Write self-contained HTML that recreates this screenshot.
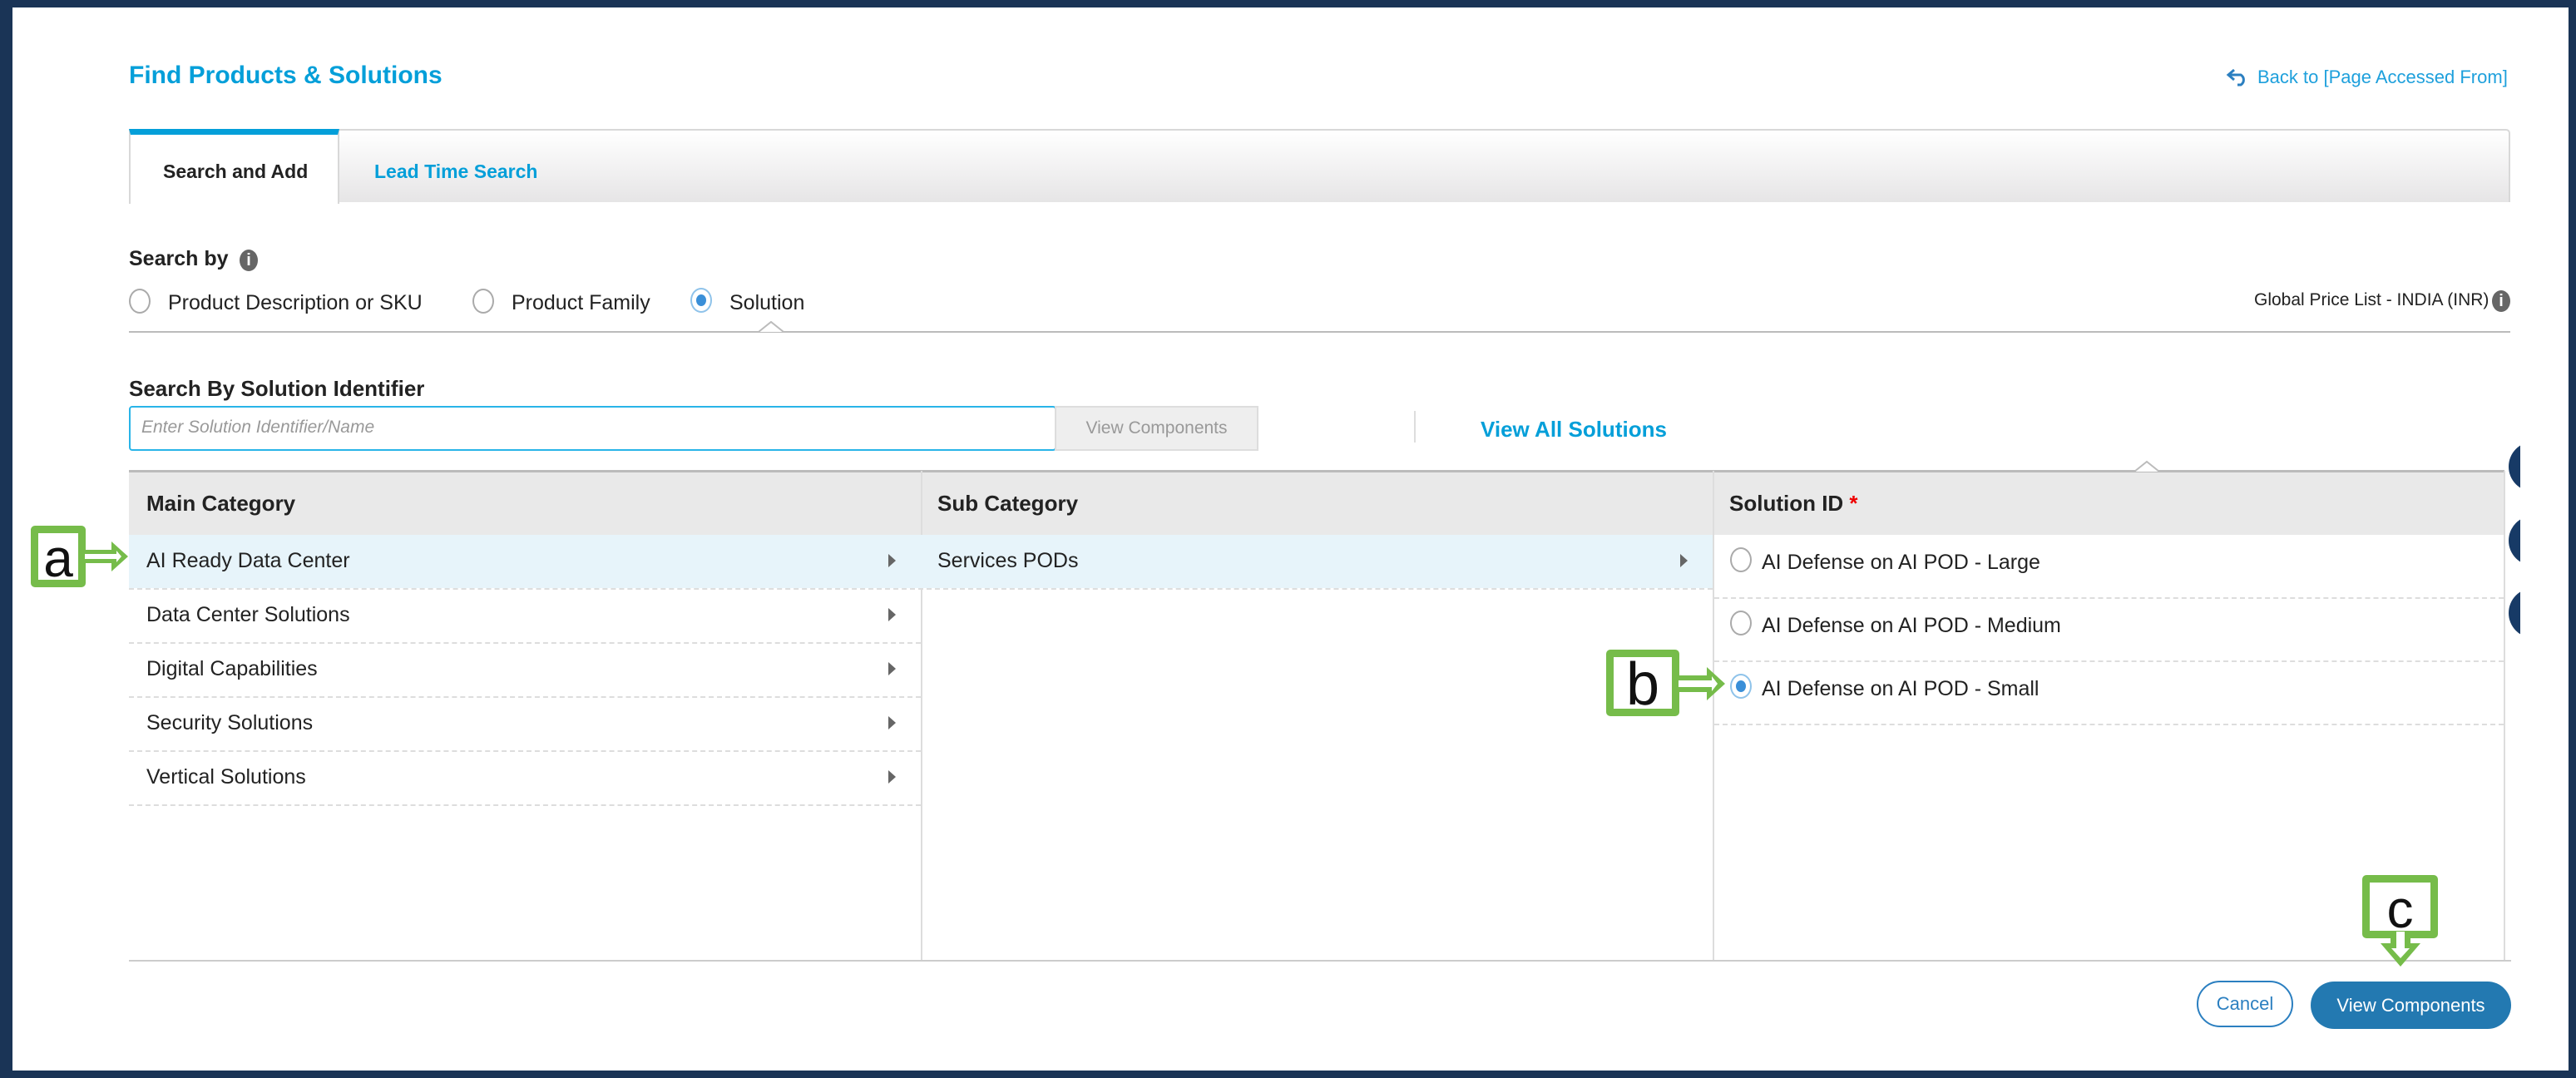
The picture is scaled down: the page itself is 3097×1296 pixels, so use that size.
<!DOCTYPE html>
<html><head><meta charset="utf-8"><style>
*{margin:0;padding:0;box-sizing:border-box}
body{width:3097px;height:1296px;background:#1a3456;position:relative;overflow:hidden;font-family:"Liberation Sans",sans-serif;color:#222}
.page{position:absolute;left:15px;top:9px;width:3073px;height:1278px;background:#fff}
.a{position:absolute;white-space:nowrap}
.blue{color:#049fd9}
.radio{position:absolute;width:26px;height:30px;border:2px solid #aaa;border-radius:50%;background:#fff}
.radio.on{border-color:#8fc3ea}
.radio.on::after{content:"";position:absolute;left:5px;top:6px;width:12px;height:14px;border-radius:50%;background:#3a8fd8}
.dash{position:absolute;height:0;border-top:2px dashed #ddd}
.tri{position:absolute;width:0;height:0;border-top:8px solid transparent;border-bottom:8px solid transparent;border-left:9px solid #666}
.info{position:absolute;width:22px;height:26px;border-radius:50%;background:#666;color:#fff;font-weight:bold;font-size:20px;text-align:center;line-height:26px}
.g{position:absolute;border:9px solid #76bc4a;border-radius:5px;background:#fff;font-size:72px;line-height:1;text-align:center;color:#111}
</style></head><body>
<div class="page"></div>

<div class="a blue" style="left:155px;top:74px;font-size:30px;font-weight:bold">Find Products &amp; Solutions</div>
<svg class="a" style="left:2676px;top:82px" width="28" height="22" viewBox="0 0 28 22"><path d="M10 2 L3 8 L10 14 M3 8 H18 A7 7 0 0 1 18 20 H14" fill="none" stroke="#2b7fc0" stroke-width="3"/></svg>
<div class="a blue" style="left:2714px;top:80px;font-size:22px;color:#1ea0dc">Back to [Page Accessed From]</div>

<!-- tab bar -->
<div class="a" style="left:155px;top:155px;width:2863px;height:88px;border:2px solid #d8d8d8;border-bottom:none;border-radius:5px 5px 0 0;background:linear-gradient(#fff,#e6e5e6)"></div>
<div class="a" style="left:155px;top:155px;width:253px;height:90px;background:#fff;border-top:7px solid #049fd9;border-right:2px solid #d8d8d8;border-left:2px solid #d8d8d8"></div>
<div class="a" style="left:196px;top:193px;font-size:23px;font-weight:bold;color:#222">Search and Add</div>
<div class="a blue" style="left:450px;top:193px;font-size:23px;font-weight:bold">Lead Time Search</div>

<div class="a" style="left:155px;top:297px;font-size:25px;font-weight:bold">Search by</div>
<div class="info" style="left:288px;top:300px">i</div>
<div class="radio" style="left:155px;top:347px"></div>
<div class="a" style="left:202px;top:350px;font-size:25px">Product Description or SKU</div>
<div class="radio" style="left:568px;top:347px"></div>
<div class="a" style="left:615px;top:350px;font-size:25px">Product Family</div>
<div class="radio on" style="left:830px;top:346px"></div>
<div class="a" style="left:877px;top:350px;font-size:25px">Solution</div>
<div class="a" style="left:2710px;top:349px;font-size:21px">Global Price List - INDIA (INR)</div>
<div class="info" style="left:2996px;top:349px">i</div>
<div class="a" style="left:155px;top:398px;width:2863px;border-top:2px solid #bbb"></div>
<svg class="a" style="left:912px;top:386px" width="30" height="14"><path d="M0 13 L15 1 L30 13" fill="#fff" stroke="#bbb" stroke-width="2"/></svg>

<div class="a" style="left:155px;top:452px;font-size:26px;font-weight:bold">Search By Solution Identifier</div>
<div class="a" style="left:155px;top:488px;width:1115px;height:54px;border:2px solid #29b4e8;border-radius:4px"></div>
<div class="a" style="left:170px;top:502px;font-size:21px;font-style:italic;color:#999">Enter Solution Identifier/Name</div>
<div class="a" style="left:1268px;top:488px;width:245px;height:54px;background:#eee;border:2px solid #ddd;color:#999;font-size:21px;text-align:center;line-height:50px">View Components</div>
<div class="a" style="left:1700px;top:494px;height:38px;border-left:2px solid #ddd"></div>
<div class="a blue" style="left:1780px;top:501px;font-size:26px;font-weight:bold">View All Solutions</div>

<!-- table -->
<div class="a" style="left:155px;top:565px;width:2856px;height:78px;background:#e9e9e9;border-top:3px solid #bbb"></div>
<svg class="a" style="left:2566px;top:553px" width="30" height="15"><path d="M0 14 L15 2 L30 14" fill="#fff" stroke="#bbb" stroke-width="2"/></svg>
<div class="a" style="left:1107px;top:566px;height:589px;border-left:2px solid #ddd"></div>
<div class="a" style="left:2059px;top:566px;height:589px;border-left:2px solid #ddd"></div>
<div class="a" style="left:3010px;top:566px;height:589px;border-left:2px solid #ddd"></div>
<div class="a" style="left:155px;top:1154px;width:2864px;border-top:2px solid #ccc"></div>
<div class="a" style="left:176px;top:590px;font-size:26px;font-weight:bold">Main Category</div>
<div class="a" style="left:1127px;top:590px;font-size:26px;font-weight:bold">Sub Category</div>
<div class="a" style="left:2079px;top:590px;font-size:26px;font-weight:bold">Solution ID <span style="color:#e00">*</span></div>

<div class="a" style="left:155px;top:643px;width:1904px;height:64px;background:#e7f4fa"></div>
<div class="a" style="left:176px;top:660px;font-size:25px">AI Ready Data Center</div>
<div class="a" style="left:176px;top:725px;font-size:25px">Data Center Solutions</div>
<div class="a" style="left:176px;top:790px;font-size:25px">Digital Capabilities</div>
<div class="a" style="left:176px;top:855px;font-size:25px">Security Solutions</div>
<div class="a" style="left:176px;top:920px;font-size:25px">Vertical Solutions</div>
<div class="tri" style="left:1068px;top:666px"></div>
<div class="tri" style="left:1068px;top:731px"></div>
<div class="tri" style="left:1068px;top:796px"></div>
<div class="tri" style="left:1068px;top:861px"></div>
<div class="tri" style="left:1068px;top:926px"></div>
<div class="dash" style="left:155px;top:707px;width:1904px"></div>
<div class="dash" style="left:155px;top:772px;width:952px"></div>
<div class="dash" style="left:155px;top:837px;width:952px"></div>
<div class="dash" style="left:155px;top:902px;width:952px"></div>
<div class="dash" style="left:155px;top:967px;width:952px"></div>
<div class="a" style="left:1127px;top:660px;font-size:25px">Services PODs</div>
<div class="tri" style="left:2020px;top:666px"></div>

<div class="radio" style="left:2080px;top:658px"></div>
<div class="a" style="left:2118px;top:662px;font-size:25px">AI Defense on AI POD - Large</div>
<div class="radio" style="left:2080px;top:734px"></div>
<div class="a" style="left:2118px;top:738px;font-size:25px">AI Defense on AI POD - Medium</div>
<div class="radio on" style="left:2080px;top:810px"></div>
<div class="a" style="left:2118px;top:814px;font-size:25px">AI Defense on AI POD - Small</div>
<div class="dash" style="left:2061px;top:718px;width:949px"></div>
<div class="dash" style="left:2061px;top:794px;width:949px"></div>
<div class="dash" style="left:2061px;top:870px;width:949px"></div>

<!-- side circles -->
<div class="a" style="left:3016px;top:531px;width:60px;height:60px;border-radius:50%;background:#173a66"></div>
<div class="a" style="left:3016px;top:620px;width:60px;height:60px;border-radius:50%;background:#173a66"></div>
<div class="a" style="left:3016px;top:707px;width:60px;height:60px;border-radius:50%;background:#173a66"></div>
<div class="a" style="left:3030px;top:500px;width:58px;height:300px;background:#fff"></div>

<!-- buttons -->
<div class="a" style="left:2641px;top:1179px;width:116px;height:56px;border:2px solid #2b7fc0;border-radius:28px;color:#2b7fc0;font-size:22px;text-align:center;line-height:52px">Cancel</div>
<div class="a" style="left:2778px;top:1180px;width:241px;height:57px;border-radius:29px;background:#2379b1;color:#fff;font-size:22px;text-align:center;line-height:57px">View Components</div>

<!-- annotations -->
<div class="g" style="left:37px;top:632px;width:66px;height:74px;font-size:64px;line-height:60px">a</div>
<svg class="a" style="left:96px;top:647px" width="64" height="44"><path d="M0 14 H38 V4 L58 22 L38 40 V30 H0 Z" fill="#76bc4a"/><path d="M6 19 H44 V15 L50 22 L44 29 V25 H6Z" fill="#fff"/></svg>
<div class="g" style="left:1931px;top:781px;width:88px;height:80px;font-size:72px;line-height:66px">b</div>
<svg class="a" style="left:2012px;top:800px" width="66" height="44"><path d="M0 12 H40 V2 L62 22 L40 42 V32 H0 Z" fill="#76bc4a"/><path d="M6 18 H46 V13 L53 22 L46 31 V26 H6Z" fill="#fff"/></svg>
<div class="g" style="left:2840px;top:1052px;width:91px;height:76px;font-size:64px;line-height:64px">c</div>
<svg class="a" style="left:2860px;top:1120px" width="52" height="46"><path d="M14 0 H38 V14 H50 L26 42 L2 14 H14 Z" fill="#76bc4a"/><path d="M21 0 H31 V20 H37 L26 32 L15 20 H21Z" fill="#fff"/></svg>
</body></html>
